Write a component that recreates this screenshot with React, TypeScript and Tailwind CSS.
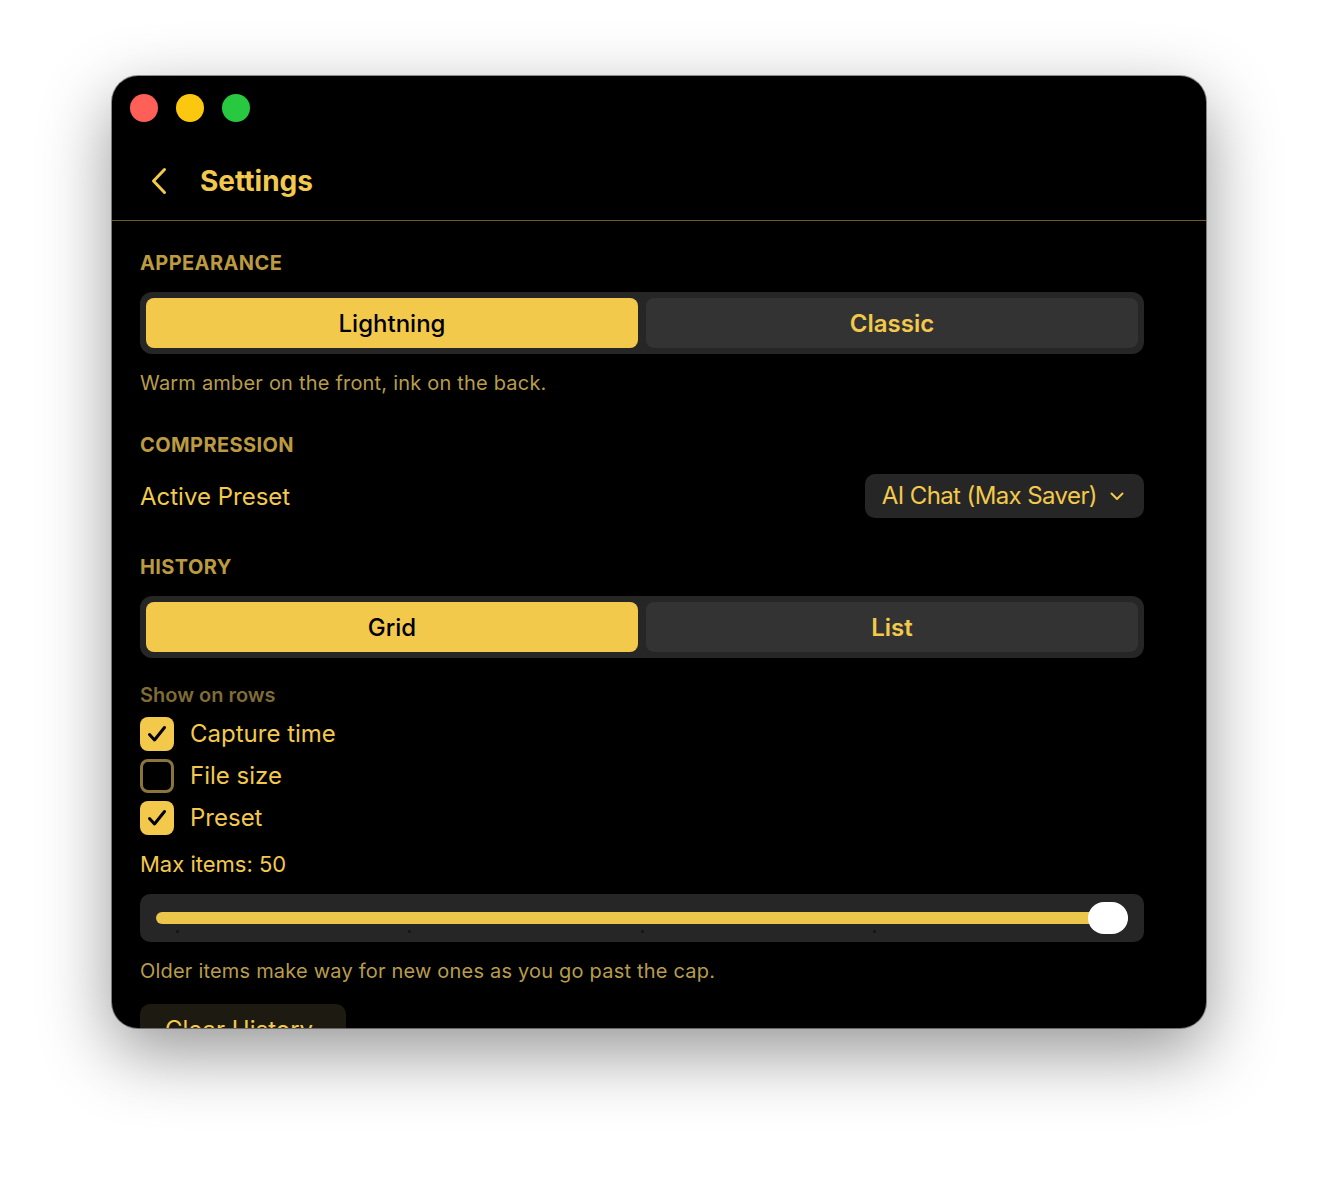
import React from "react";

const amber = "text-[#f3c94c]";

const Segmented = ({ left, right }: { left: string; right: string }) => (
  <div className="flex h-[62px] gap-2 rounded-[12px] bg-[#262626] p-[6px]">
    <div className="flex flex-1 items-center justify-center rounded-[8px] bg-[#f3c94c] pt-[1px] text-[24px] font-medium text-black">
      {left}
    </div>
    <div className={`flex flex-1 items-center justify-center rounded-[8px] bg-[#333333] pt-[1px] text-[24px] font-semibold ${amber}`}>
      {right}
    </div>
  </div>
);

const SectionLabel = ({ children, className = "" }: { children: React.ReactNode; className?: string }) => (
  <div className={`text-[20px] font-bold leading-6 tracking-[0.02em] text-[#bb9a40] ${className}`}>{children}</div>
);

const Check = ({ checked, label }: { checked: boolean; label: string }) => (
  <div className="flex h-[34px] items-center gap-4">
    {checked ? (
      <div className="flex h-[34px] w-[34px] items-center justify-center rounded-[8px] bg-[#f3c94c]">
        <svg width="20" height="18" viewBox="0 0 20 18" fill="none">
          <path d="M2.5 9.5 L7.5 15 L17.5 2.5" stroke="#000" strokeWidth="3" strokeLinecap="round" strokeLinejoin="round" />
        </svg>
      </div>
    ) : (
      <div className="h-[34px] w-[34px] rounded-[8px] border-[3px] border-[#8a763a]" />
    )}
    <span className={`text-[24px] ${amber}`}>{label}</span>
  </div>
);

export default function App() {
  const ticks = [0, 1, 2, 3, 4];
  return (
    <div
      className="h-[1178px] w-[1318px] bg-white pl-[112px] pt-[76px]"
      style={{ fontFamily: "Inter, 'Noto Sans', sans-serif" }}
    >
      <div className="flex h-[952px] w-[1094px] flex-col overflow-hidden rounded-[26px] bg-black shadow-[0_24px_70px_rgba(0,0,0,0.42)] ring-1 ring-black/40">
        {/* title bar */}
        <div className="flex h-[60px] shrink-0 items-start gap-[18px] pl-[18px] pt-[18px]">
          <div className="h-[28px] w-[28px] rounded-full bg-[#fe5f57]" />
          <div className="h-[28px] w-[28px] rounded-full bg-[#fbc80f]" />
          <div className="h-[28px] w-[28px] rounded-full bg-[#28c840]" />
        </div>

        {/* header */}
        <div className="flex h-[85px] shrink-0 items-center border-b border-[#6e5c2a] pl-[39px] pt-[6px]">
          <svg width="16" height="28" viewBox="0 0 16 28" fill="none">
            <path d="M13.5 2.5 L2.5 14 L13.5 25.5" stroke="#f3c94c" strokeWidth="3" strokeLinecap="round" strokeLinejoin="round" />
          </svg>
          <span className={`ml-[33px] text-[28px] font-bold ${amber}`}>Settings</span>
        </div>

        {/* content */}
        <div className="flex flex-col pl-[28px] pr-[62px]">
          <SectionLabel className="mt-[30px]">APPEARANCE</SectionLabel>
          <div className="mt-[17px]">
            <Segmented left="Lightning" right="Classic" />
          </div>
          <div className="mt-[17px] text-[20px] leading-6 tracking-[0.01em] text-[#b89d4c]">Warm amber on the front, ink on the back.</div>

          <SectionLabel className="mt-[38px]">COMPRESSION</SectionLabel>
          <div className="mt-[17px] flex items-center justify-between">
            <span className={`pt-[1px] text-[24px] ${amber}`}>Active Preset</span>
            <div className={`flex h-[44px] items-center gap-[13px] whitespace-nowrap rounded-[10px] bg-[#262626] pl-[17px] pr-[20px] text-[24px] tracking-[-0.025em] ${amber}`}>
              <span>AI Chat (Max Saver)</span>
              <svg width="14" height="9" viewBox="0 0 14 9" fill="none">
                <path d="M1.5 1.5 L7 7 L12.5 1.5" stroke="#f3c94c" strokeWidth="2" strokeLinecap="round" strokeLinejoin="round" />
              </svg>
            </div>
          </div>

          <SectionLabel className="mt-[37px]">HISTORY</SectionLabel>
          <div className="mt-[17px]">
            <Segmented left="Grid" right="List" />
          </div>

          <div className="mt-[25px] text-[20px] font-semibold leading-6 text-[#7f6c37]">Show on rows</div>
          <div className="mt-[10px] flex flex-col gap-2">
            <Check checked label="Capture time" />
            <Check checked={false} label="File size" />
            <Check checked label="Preset" />
          </div>

          <div className={`mt-[17px] text-[22px] leading-6 ${amber}`}>Max items: 50</div>
          <div className="relative mt-[18px] flex h-[48px] items-center rounded-[10px] bg-[#262626] px-[16px]">
            <div className="h-[12px] w-full rounded-full bg-[#ecc64a]" />
            <div className="absolute bottom-[9px] left-[36px] right-[36px] flex justify-between">
              {ticks.map((t) => (
                <div key={t} className="h-[3px] w-[3px] rounded-full bg-[#141414]" />
              ))}
            </div>
            <div className="absolute right-[16px] top-[8px] h-[32px] w-[40px] rounded-full bg-white" />
          </div>
          <div className="mt-[17px] text-[20px] leading-6 tracking-[0.01em] text-[#b89d4c]">
            Older items make way for new ones as you go past the cap.
          </div>

          <div className="mt-[21px] flex">
            <div className={`flex h-[52px] w-[206px] items-center rounded-[10px] bg-[#1c1a11] pl-[25px] text-[24px] ${amber}`}>
              Clear History
            </div>
          </div>
        </div>
      </div>
    </div>
  );
}
